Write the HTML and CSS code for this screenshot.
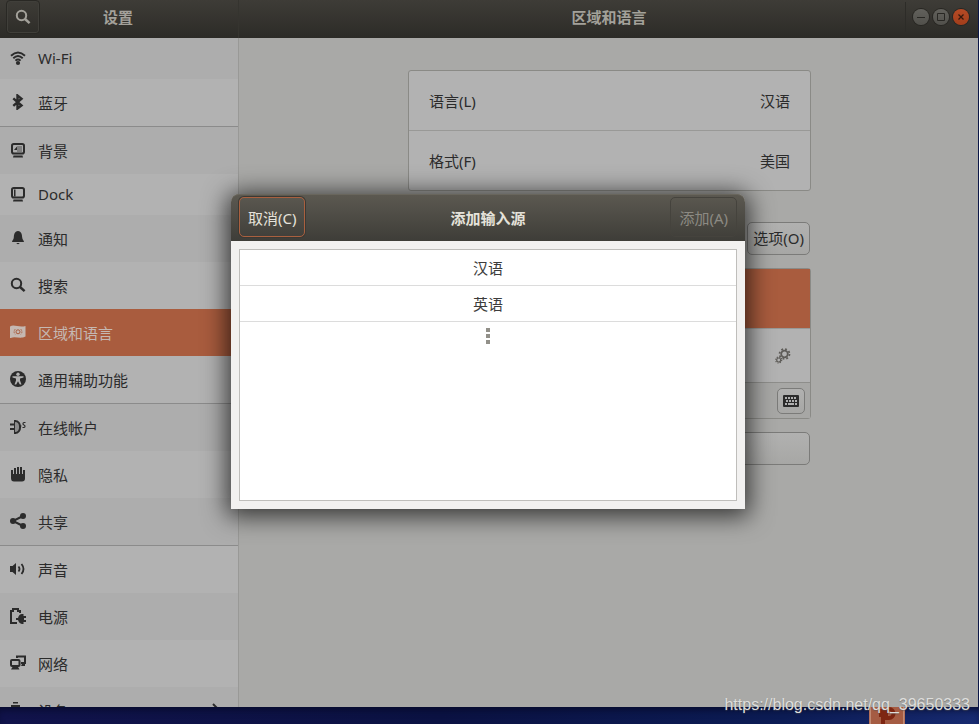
FILE: index.html
```html
<!DOCTYPE html>
<html lang="zh-CN">
<head>
<meta charset="utf-8">
<title>设置</title>
<link rel="stylesheet" href="styles.css">
</head>
<body>
<div class="window">
  <header class="titlebar">
    <div class="titlebar-side">
      <button class="search-button" type="button" aria-label="搜索">
        <svg width="16" height="16" viewBox="0 0 16 16"><circle cx="6.5" cy="6.5" r="4.7" fill="none" stroke="currentColor" stroke-width="2"/><path d="M10 10l4.6 4.2" stroke="currentColor" stroke-width="2.4"/></svg>
      </button>
      <h1 class="title">设置</h1>
    </div>
    <div class="titlebar-main">
      <h2 class="title">区域和语言</h2>
      <div class="controls">
        <button class="control" type="button" aria-label="最小化"><svg width="16" height="16" viewBox="0 0 16 16"><path d="M4 8.500h8" stroke="currentColor"/></svg></button>
        <button class="control" type="button" aria-label="最大化"><svg width="16" height="16" viewBox="0 0 16 16"><path d="M4.500 4.500h7v7h-7z" fill="none" stroke="currentColor"/></svg></button>
        <button class="control control-close" type="button" aria-label="关闭"><svg width="16" height="16" viewBox="0 0 16 16"><path d="M5.500 5.500l5 5M10.500 5.500l-5 5" stroke="currentColor" stroke-width="1.300"/></svg></button>
      </div>
    </div>
  </header>
  <div class="body">
    <nav class="sidebar">
      <a class="item item-latin" href="#wifi"><svg class="icon" viewBox="0 0 16 16"><path d="M1 5.800Q8-.8 15 5.800M3.300 8.300Q8 3.800 12.700 8.300M5.400 10.600Q8 8.200 10.600 10.600" fill="none" stroke="currentColor" stroke-width="1.900"/><circle cx="8" cy="13" r="2.100"/></svg>Wi-Fi</a>
      <a class="item" href="#bluetooth"><svg class="icon" viewBox="0 0 16 16"><path d="M3.300 4.300l8.200 7.200L7.500 14.500V1.500l4 3.200-8.200 7.200" fill="none" stroke="currentColor" stroke-width="2.400"/></svg>蓝牙</a>
      <a class="item group" href="#background"><svg class="icon" viewBox="0 0 16 16"><rect x="2" y="2" width="12" height="9.500" rx="1.800" fill="none" stroke="currentColor" stroke-width="2"/><path d="M7 4h5v6H7z" opacity=".35"/><path d="M4 8l3-3.500v3.500zM3.500 13.500h9l.5 2H3z"/></svg>背景</a>
      <a class="item item-latin" href="#dock"><svg class="icon" viewBox="0 0 16 16"><rect x="2" y="2" width="12" height="9.500" rx="1.800" fill="none" stroke="currentColor" stroke-width="2"/><path d="M4 3.500h1.500v7H4zM3.500 13.500h9l.5 2H3z"/></svg>Dock</a>
      <a class="item" href="#notify"><svg class="icon" viewBox="0 0 16 16"><path d="M8 1C4.500 1.500 4 4.500 3.800 7.500 3.700 9.800 2 10.500 2 12h12c0-1.500-1.700-2.200-1.800-4.500C12 4.500 11.500 1.500 8 1zM6.500 13h3c0 1.500-3 1.500-3 0z"/></svg>通知</a>
      <a class="item" href="#search"><svg class="icon" viewBox="0 0 16 16"><circle cx="6.500" cy="6.500" r="4.700" fill="none" stroke="currentColor" stroke-width="2"/><path d="M10 10l4.600 4.200" stroke="currentColor" stroke-width="2.400"/></svg>搜索</a>
      <a class="item item-selected" href="#region" aria-current="page"><svg class="icon" viewBox="0 0 16 16"><path d="M0 2.500C4-.2 9 4 15.500 2v10.500C10 15.500 5 11.500.8 14H0z"/><g fill="none" stroke="#a95c3e"><circle cx="8" cy="7.800" r="2"/><path d="M5.200 5.200Q3 7.800 5.200 10.300M10.800 5.200Q13 7.800 10.800 10.300" stroke-dasharray="1.500 1"/></g></svg>区域和语言</a>
      <a class="item" href="#access"><svg class="icon" viewBox="0 0 16 16"><circle cx="8" cy="8" r="8"/><g fill="#b2b2b2"><circle cx="8" cy="3.300" r="1.700"/><path d="M2.500 5.200L13.500 5.200V6.500L10 7.500V9.500L11.500 13.500H9.800L8 10.200 6.200 13.500H4.500L6 9.500V7.500L2.500 6.500z"/></g></svg>通用辅助功能</a>
      <a class="item group" href="#accounts"><svg class="icon" viewBox="0 0 16 16"><path d="M0 5.500h5M0 10h5M5 1v14" fill="none" stroke="currentColor" stroke-width="2"/><path d="M5 2c6.800 0 6.800 12 0 12" fill="#8b8b8b" stroke="currentColor" stroke-width="2"/><path d="M15.500 3.500h-1.500q-1 0-1 1.200 0 1 1 1.300t1 1.300q0 1.200-1 1.200h-1.500M10 7h1.500" fill="none" stroke="currentColor" stroke-width="1.200"/></svg>在线帐户</a>
      <a class="item" href="#privacy"><svg class="icon" viewBox="0 0 16 16"><path d="M1 4h2v4h1V2h2v6h1V1h2v7h1V1h2v7h1V4h2v8.500Q15 15.500 12 15.500H4Q1 15.500 1 12z"/></svg>隐私</a>
      <a class="item" href="#sharing"><svg class="icon" viewBox="0 0 16 16"><path d="M13 3L3 8l10 5" fill="none" stroke="currentColor" stroke-width="2"/><circle cx="3" cy="8" r="3"/><circle cx="13" cy="3" r="3"/><circle cx="13" cy="13" r="3"/></svg>共享</a>
      <a class="item group" href="#sound"><svg class="icon" viewBox="0 0 16 16"><path d="M0 5h2.500L6 2v12L2.500 11H0z"/><path d="M8.500 5.500Q10.500 8 8.500 10.500M11.500 3Q15.500 8 11.500 13" fill="none" stroke="currentColor" stroke-width="1.800"/></svg>声音</a>
      <a class="item" href="#power"><svg class="icon" viewBox="0 0 16 16"><path d="M7 15H1V3h2V1h5v2h2v2" fill="none" stroke="currentColor" stroke-width="2"/><path d="M6 10h2q1-4 4-4h1.500v2H16v2h-2v2h2v2h-2.500v2H12Q9 15.500 8 12H6z"/></svg>电源</a>
      <a class="item" href="#network"><svg class="icon" viewBox="0 0 16 16"><path d="M7 3V1.500h8V8h-4" fill="none" stroke="currentColor" stroke-width="2"/><path d="M12 9h3v2h-4z"/><rect x="1" y="5" width="8.500" height="6" rx="1" fill="none" stroke="currentColor" stroke-width="2"/><path d="M2.500 12H8l1.500 2.500H1z"/></svg>网络</a>
      <a class="item" href="#devices"><svg class="icon" viewBox="0 0 16 16"><path d="M3 0h5v1.500H3zM1 3h9v12H1z"/></svg>设备<svg class="icon arrow" viewBox="0 0 16 16"><path d="M5 2l6 6-6 6" fill="none" stroke="currentColor" stroke-width="2"/></svg></a>
    </nav>
    <main class="content">
      <div class="panel">
        <div class="list">
          <button class="setting" type="button"><span>语言(L)</span><span>汉语</span></button>
          <button class="setting" type="button"><span>格式(F)</span><span>美国</span></button>
        </div>
        <div class="options"><button class="button" type="button">选项(O)</button></div>
        <div class="list sources">
          <div class="source source-selected"></div>
          <div class="source">
            <svg width="16" height="16" viewBox="0 0 16 16" fill="none" stroke="#5e5c58"><circle cx="9.500" cy="6" r="3.300" stroke-width="1.800"/><circle cx="9.500" cy="6" r="5" stroke-width="1.700" stroke-dasharray="1.900 2.030"/><circle cx="3.700" cy="12" r="2" stroke-width="1.200"/><circle cx="3.700" cy="12" r="3" stroke-width="1.200" stroke-dasharray="1.150 1.200"/></svg>
          </div>
          <div class="toolbar">
            <button class="button button-icon" type="button" aria-label="显示键盘布局"><svg width="16" height="12" viewBox="0 0 16 12"><rect width="16" height="12" rx="1" fill="#2b2b2b"/><path d="M2 3h12M3 6h11" stroke="#b0b0b0" stroke-width="2" stroke-dasharray="2 1"/><path d="M2 9h2M5 9h6M12 9h2" stroke="#b0b0b0" stroke-width="2"/></svg></button>
          </div>
        </div>
        <button class="button button-wide" type="button" aria-label="管理已安装的语言"></button>
      </div>
    </main>
  </div>
  <div class="overlay">
    <section class="dialog" role="dialog" aria-labelledby="dialog-title">
      <header class="dialog-header">
        <button class="dialog-button dialog-button-focus" type="button">取消(C)</button>
        <h2 class="title" id="dialog-title">添加输入源</h2>
        <button class="dialog-button" type="button" disabled>添加(A)</button>
      </header>
      <div class="dialog-body">
        <div class="choices">
          <button class="choice" type="button">汉语</button>
          <button class="choice" type="button">英语</button>
          <button class="more" type="button" aria-label="更多"><svg width="4" height="16" viewBox="0 0 4 16"><path d="M0 0h4v4H0zM0 6h4v4H0zM0 12h4v4H0z" fill="#929089"/></svg></button>
        </div>
      </div>
    </section>
  </div>
</div>
<div class="desktop">
  <svg class="launcher" width="36" height="17" viewBox="0 0 36 17"><rect width="36" height="20" fill="#b3705a"/><rect x="1.500" y="-2" width="33" height="24" fill="#a55c43" stroke="#c08a74"/><path d="M12 4h5v4h-5zM18 2h2a4 4 0 0 1 0 9h-6v6" fill="none" stroke="#7e2612" stroke-width="4"/></svg>
  <p class="watermark">https://blog.csdn.net/qq_39650333</p>
</div>
</body>
</html>
```
FILE: styles.css
```css
* {
  box-sizing: border-box;
}

body {
  display: flex;
  flex-direction: column;
  height: 100vh;
  margin: 0;
  overflow: hidden;
  background: #0b1748;
  color: #2b2b2b;
  font: 15px/22px "Noto Sans", "Noto Sans CJK SC", sans-serif;
}

button {
  margin: 0;
  padding: 0;
  border: 0;
  background: none;
  color: inherit;
  font: inherit;
}

.window {
  position: relative;
  display: flex;
  flex: 1;
  flex-direction: column;
  min-height: 0;
  margin-right: 1px;
  background: #a9a9a7;
}

.titlebar {
  display: flex;
  flex: none;
  height: 38px;
  background: linear-gradient(#3e3c37, #2c2b27);
  color: #a3a19a;
}

.titlebar-side {
  display: flex;
  align-items: center;
  width: 239px;
  padding: 0 6px;
  border-right: 1px solid #35342f;
}

.titlebar-main {
  display: flex;
  flex: 1;
  align-items: center;
  padding-right: 9px;
}

.title {
  flex: 1;
  margin: 0;
  font-size: 15px;
  font-weight: 700;
  text-align: center;
}

.titlebar .title {
  padding-bottom: 4px;
}

.titlebar-side .title {
  padding-right: 36px;
}

.titlebar-main .title {
  padding-left: 74px;
}

.search-button {
  display: grid;
  flex: none;
  place-items: center;
  width: 34px;
  height: 34px;
  margin-bottom: 4px;
  border: 1px solid #292824;
  border-radius: 4px;
  box-shadow: inset 0 0 0 1px #403f3a;
}

.controls {
  display: flex;
  align-items: center;
  gap: 4px;
  height: 30px;
  margin-bottom: 4px;
  padding-left: 7px;
  border-left: 1px solid #2d2c28;
}

.control {
  display: grid;
  place-items: center;
  width: 16px;
  height: 16px;
  border-radius: 50%;
  background: linear-gradient(#62615c, #51504b);
  box-shadow: 0 0 0 1px #272622;
  color: #282723;
}

.control-close {
  background: linear-gradient(#b64a25, #a23e1b);
  color: #35180d;
}

.body {
  display: flex;
  flex: 1;
  min-height: 0;
}

.sidebar {
  flex: none;
  width: 239px;
  overflow: hidden;
  border-right: 1px solid #999997;
}

.item {
  display: flex;
  align-items: center;
  gap: 12px;
  height: 47px;
  padding: 0 10px;
  background: #b2b2b2;
  color: inherit;
  text-decoration: none;
}

.item:nth-child(odd) {
  background: #adadad;
}

.item-latin {
  height: 41px;
  padding-bottom: 2px;
}

.item-latin .icon {
  margin-bottom: 0;
}

.group {
  height: 48px;
  border-top: 1px solid #8b8b8b;
}

.item.item-selected {
  background: #a95c3e;
  color: #c5b8b2;
}

.icon {
  flex: none;
  width: 16px;
  height: 16px;
  margin-bottom: 2px;
  fill: currentColor;
}

.arrow {
  margin-left: auto;
  margin-right: 4px;
}

.content {
  flex: 1;
  padding: 32px 19px 32px 21px;
}

.panel {
  width: 403px;
  max-width: 100%;
  margin: 0 auto;
}

.list {
  border: 1px solid #8a8a86;
  border-radius: 3px;
  background: #b2b2b2;
}

.setting {
  display: flex;
  align-items: center;
  justify-content: space-between;
  width: 100%;
  height: 59px;
  padding: 0 20px;
}

.setting + .setting {
  height: 60px;
  border-top: 1px solid #999997;
}

.options {
  display: flex;
  justify-content: flex-end;
  margin: 31px 0 13px;
  padding-right: 1px;
}

.button {
  height: 33px;
  padding: 0 5px 2px;
  border: 1px solid #7b7b79;
  border-radius: 5px;
  background: linear-gradient(#b1b1b0, #a7a7a5);
}

.source {
  display: flex;
  align-items: center;
  justify-content: flex-end;
  height: 53px;
  padding-right: 19px;
}

.source-selected {
  height: 60px;
  border-bottom: 1px solid #999997;
  background: #a95c3e;
}

.toolbar {
  display: flex;
  align-items: center;
  justify-content: flex-end;
  height: 36px;
  padding-right: 5px;
  border-top: 1px solid #8e8e8b;
  background: #a7a7a5;
}

.button-icon {
  display: grid;
  place-items: center;
  width: 28px;
  height: 26px;
  padding: 0;
}

.button-wide {
  display: block;
  width: 402px;
  max-width: 100%;
  margin-top: 13px;
}

.overlay {
  position: absolute;
  inset: 0 2px 4px 0;
  display: grid;
  place-items: center;
}

.dialog {
  width: 514px;
  max-width: 100%;
  border-radius: 8px 8px 0 0;
  background: #f2f1f0;
  box-shadow: 0 3px 24px 4px rgba(0, 0, 0, 0.7);
}

.dialog-header {
  display: flex;
  align-items: center;
  justify-content: space-between;
  height: 47px;
  padding: 0 8px 2px;
  border-radius: 8px 8px 0 0;
  background: linear-gradient(#5c5951, #3e3d38);
  box-shadow: inset 0 1px 0 #69665d;
  color: #e5e2da;
}

.dialog-header .title {
  padding-top: 2px;
}

.dialog-button {
  height: 40px;
  padding: 2px 8px 0;
  border: 1px solid #45433d;
  border-radius: 5px;
}

.dialog-button:disabled {
  color: #8c8a83;
}

.dialog-button-focus {
  border-color: #a9603f;
  box-shadow: 0 0 0 1px #3b3934;
}

.dialog-body {
  padding: 8px;
}

.choices {
  min-height: 252px;
  border: 1px solid #bfbebb;
  background: #fff;
  color: #3c3c3c;
}

.choice,
.more {
  display: block;
  width: 100%;
}

.choice {
  height: 36px;
  border-bottom: 1px solid #dcdcdc;
}

.more {
  display: grid;
  place-items: center;
  height: 28px;
}

.desktop {
  position: relative;
  flex: none;
  height: 17px;
  background: linear-gradient(90deg, #11134b, #0b1243 45%, #0c1c55 80%, #172a70);
  box-shadow: inset 0 6px 8px -4px #060a28;
}

.launcher {
  position: absolute;
  right: 74px;
  bottom: 0;
}

.watermark {
  position: absolute;
  right: 9px;
  bottom: 8px;
  margin: 0;
  color: #dededc;
  font: 16px/22px "Liberation Sans", sans-serif;
  text-shadow: 0 1px 1px rgba(80, 80, 80, 0.5);
}
```
